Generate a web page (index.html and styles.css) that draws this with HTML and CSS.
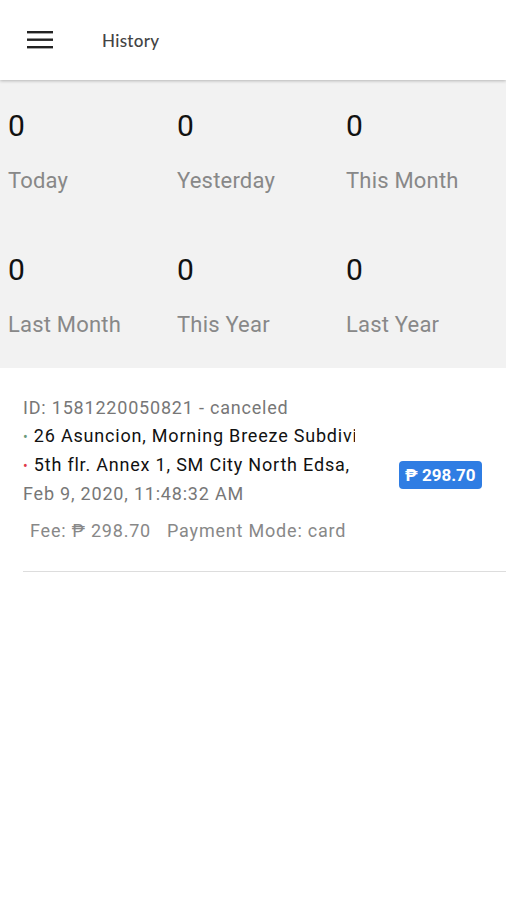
FILE: index.html
```html
<!DOCTYPE html>
<html lang="en">
<head>
    <meta charset="UTF-8">
    <meta name="viewport" content="width=device-width, initial-scale=1.0">
    <title>History</title>
    <link rel="stylesheet" href="styles.css">
</head>
<body>
    <header class="toolbar">
        <button class="menu-btn" aria-label="Menu">
            <svg width="26" height="18" viewBox="0 0 26 18">
                <rect x="0" y="0" width="26" height="2.4" fill="#222"/>
                <rect x="0" y="7.5" width="26" height="2.4" fill="#222"/>
                <rect x="0" y="15" width="26" height="2.4" fill="#222"/>
            </svg>
        </button>
        <h1 class="title">History</h1>
    </header>

    <section class="stats">
        <div class="stat"><div class="stat-value">0</div><div class="stat-label">Today</div></div>
        <div class="stat"><div class="stat-value">0</div><div class="stat-label">Yesterday</div></div>
        <div class="stat"><div class="stat-value">0</div><div class="stat-label">This Month</div></div>
        <div class="stat"><div class="stat-value">0</div><div class="stat-label">Last Month</div></div>
        <div class="stat"><div class="stat-value">0</div><div class="stat-label">This Year</div></div>
        <div class="stat"><div class="stat-value">0</div><div class="stat-label">Last Year</div></div>
    </section>

    <section class="history-list">
        <div class="trip">
            <div class="trip-info">
                <div class="trip-id">ID: 1581220050821 - canceled</div>
                <div class="trip-addr"><span class="dot pickup">&bull;</span> 26 Asuncion, Morning Breeze Subdivision, Caloocan City</div>
                <div class="trip-addr"><span class="dot dropoff">&bull;</span> 5th flr. Annex 1, SM City North Edsa, Quezon City</div>
                <div class="trip-date">Feb 9, 2020, 11:48:32 AM</div>
                <div class="trip-meta">
                    <span>Fee: &#8369; 298.70</span>
                    <span>Payment Mode: card</span>
                </div>
            </div>
            <div class="trip-price">&#8369; 298.70</div>
        </div>
    </section>
</body>
</html>
```

FILE: styles.css
```css
body {
    margin: 0;
    font-family: Roboto, 'Liberation Sans', sans-serif;
    background: #fff;
    color: #222;
}
.toolbar {
    height: 80px;
    display: flex;
    align-items: center;
    background: #fff;
    box-shadow: 0 1px 3px rgba(0, 0, 0, 0.25);
    position: relative;
    z-index: 1;
}
.menu-btn {
    background: none;
    border: none;
    padding: 0;
    margin-left: 27px;
    width: 26px;
    height: 18px;
    display: flex;
}
.title {
    margin: 0 0 0 49px;
    font-size: 17px;
    font-weight: 500;
    color: #444;
    font-family: Lato, Roboto, sans-serif;
    letter-spacing: 0.3px;
}
.stats {
    background: #f2f2f2;
    display: grid;
    grid-template-columns: repeat(3, 169px);
    padding-left: 8px;
}
.stat {
    height: 144px;
    padding-top: 26px;
    box-sizing: border-box;
}
.stat-value {
    font-size: 30px;
    line-height: 40px;
    color: #111;
}
.stat-label {
    margin-top: 20px;
    font-size: 22px;
    line-height: 30px;
    color: #888;
    letter-spacing: 0.2px;
}
.history-list {
    padding-left: 23px;
}
.trip {
    display: flex;
    padding: 26px 0 26px;
    border-bottom: 1px solid #ddd;
}
.trip-info {
    width: 332px;
    overflow: hidden;
    font-size: 18px;
    letter-spacing: 0.8px;
}
.trip-id,
.trip-date {
    line-height: 28px;
    color: #777;
    white-space: nowrap;
}
.trip-addr {
    line-height: 28px;
    color: #111;
    white-space: nowrap;
}
.dot {
    font-size: 14px;
}
.dot.pickup {
    color: #6a9a7a;
}
.dot.dropoff {
    color: #e03a4a;
}
.trip-meta {
    margin-top: 9px;
    padding-left: 7px;
    line-height: 28px;
    color: #888;
    display: flex;
    gap: 16px;
    white-space: nowrap;
}
.trip-price {
    align-self: center;
    margin: 10px 0 0 44px;
    background: #2f7de3;
    color: #fff;
    font-weight: 700;
    font-size: 17px;
    line-height: 28px;
    padding: 0 6px;
    border-radius: 4px;
    white-space: nowrap;
}
```
